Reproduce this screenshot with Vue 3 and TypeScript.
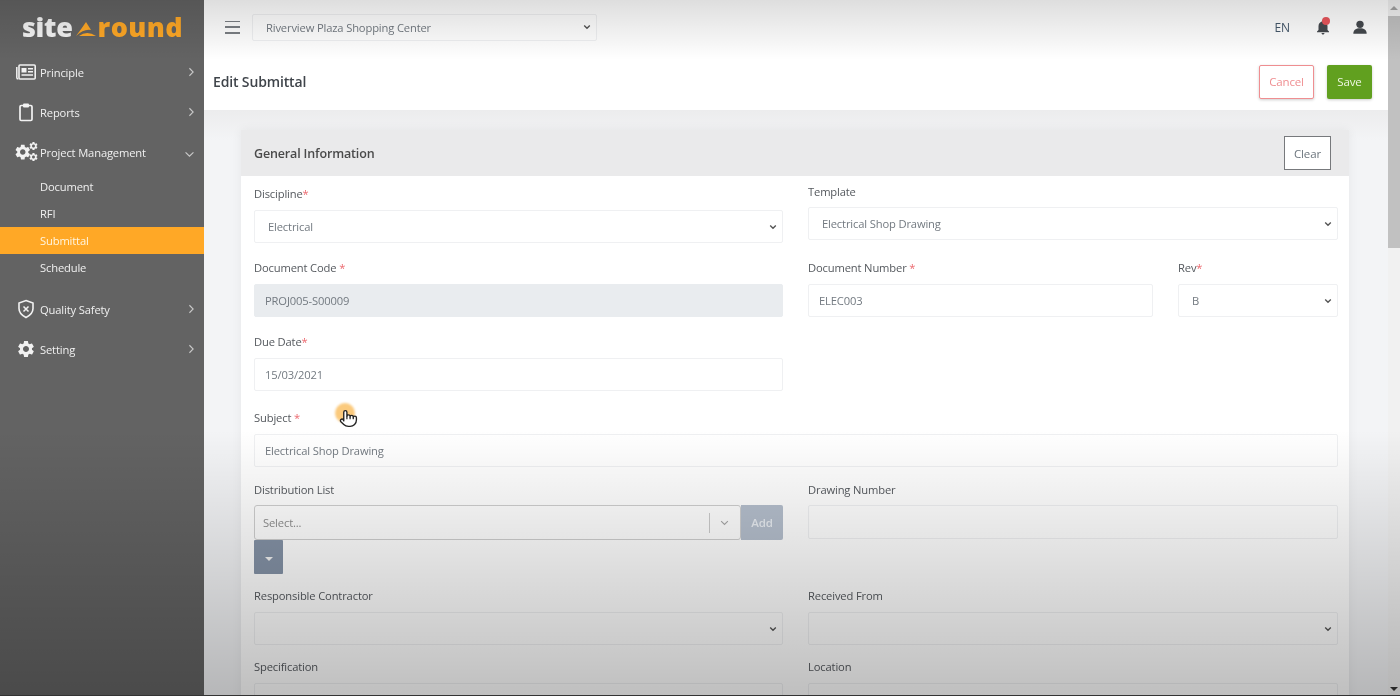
<template>
  <div class="app">
    <aside class="sidebar">
      <div class="logo">
        <span class="logo-site">site</span>
        <svg class="logo-mark" viewBox="0 0 20 14">
          <path d="M10 0 L15 8 Q8 6.500 0 14 Q6 6 10 0Z" fill="#ffa826" />
          <path d="M3 14 Q11 8 20 14Z" fill="#ffa826" />
        </svg>
        <span class="logo-round">round</span>
      </div>

      <nav class="nav">
        <a class="nav-item">
          <svg class="nav-icon" viewBox="0 0 20 16">
            <path d="M0.8 3v10.500c0 1 .7 1.500 1.500 1.500" fill="none" stroke="#f2f2f2" stroke-width="1.500" />
            <rect x="3" y="1" width="16.200" height="14" rx="1" fill="none" stroke="#f2f2f2" stroke-width="1.600" />
            <rect x="5.500" y="4" width="5" height="4.500" fill="#f2f2f2" />
            <path d="M12 4.700h5M12 7.700h5M5.500 11h11.500" stroke="#f2f2f2" stroke-width="1.400" />
          </svg>
          <span>Principle</span>
          <svg class="chev" viewBox="0 0 8 12"><path d="M1.500 1.500 6 6l-4.500 4.500" /></svg>
        </a>
        <a class="nav-item">
          <svg class="nav-icon" viewBox="0 0 20 20">
            <rect x="4" y="3.500" width="12" height="15" rx="1.200" fill="none" stroke="#f2f2f2" stroke-width="1.700" />
            <rect x="7" y="1.500" width="6" height="4" rx="1" fill="#f2f2f2" />
          </svg>
          <span>Reports</span>
          <svg class="chev" viewBox="0 0 8 12"><path d="M1.500 1.500 6 6l-4.500 4.500" /></svg>
        </a>
        <a class="nav-item">
          <svg class="nav-icon cogs" viewBox="0 0 24 20">
            <path :d="gearPath" fill="#f2f2f2" transform="translate(-1.500 .5) scale(.8)" />
            <path :d="gearPath" fill="#f2f2f2" transform="translate(14 -1.500) scale(.44)" />
            <path :d="gearPath" fill="#f2f2f2" transform="translate(14 10) scale(.44)" />
          </svg>
          <span>Project Management</span>
          <svg class="chev chev-open" viewBox="0 0 12 8"><path d="M1.500 1.500 6 6l4.500-4.500" /></svg>
        </a>
        <div class="subnav">
          <a v-for="item in subItems" :key="item" class="sub-item" :class="{ active: item === 'Submittal' }">{{ item }}</a>
        </div>
        <a class="nav-item">
          <svg class="nav-icon" viewBox="0 0 20 20">
            <path d="M10 1.500 17 4v5.500c0 4-3 7-7 9-4-2-7-5-7-9V4z" fill="none" stroke="#f2f2f2" stroke-width="1.600" />
            <path d="M7.500 7.500l5 5M12.500 7.500l-5 5" stroke="#f2f2f2" stroke-width="1.500" />
          </svg>
          <span>Quality Safety</span>
          <svg class="chev" viewBox="0 0 8 12"><path d="M1.500 1.500 6 6l-4.500 4.500" /></svg>
        </a>
        <a class="nav-item">
          <svg class="nav-icon" viewBox="0 0 24 24">
            <path :d="gearPath" fill="#f2f2f2" />
          </svg>
          <span>Setting</span>
          <svg class="chev" viewBox="0 0 8 12"><path d="M1.500 1.500 6 6l-4.500 4.500" /></svg>
        </a>
      </nav>
    </aside>

    <main class="main">
      <header class="topbar">
        <button class="burger" aria-label="menu"><i></i><i></i><i></i></button>
        <select class="project-select">
          <option>Riverview Plaza Shopping Center</option>
        </select>
        <div class="top-right">
          <span class="lang">EN</span>
          <span class="bell">
            <svg viewBox="0 0 24 24"><path d="M12 22c1.100 0 2-.9 2-2h-4c0 1.100.89 2 2 2zm6-6v-5c0-3.070-1.640-5.640-4.500-6.320V4c0-.83-.67-1.500-1.500-1.500s-1.500.67-1.500 1.500v.68C7.630 5.360 6 7.920 6 11v5l-2 2v1h16v-1l-2-2z" fill="#45494e" /></svg>
            <b class="dot"></b>
          </span>
          <svg class="user" viewBox="0 0 24 24">
            <circle cx="12" cy="8" r="5.500" fill="#45494e" />
            <path d="M2 22c0-5.500 4-8 10-8s10 2.500 10 8z" fill="#45494e" />
          </svg>
        </div>
      </header>

      <div class="page-head">
        <h1>Edit Submittal</h1>
        <div class="head-actions">
          <button class="btn-cancel">Cancel</button>
          <button class="btn-save">Save</button>
        </div>
      </div>

      <div class="content">
        <section class="card">
          <div class="card-head">
            <h2>General Information</h2>
            <button class="btn-clear">Clear</button>
          </div>
          <form class="form" @submit.prevent>
            <div class="row row-first">
              <div class="field shifted">
                <label>Discipline<em>*</em></label>
                <select><option>Electrical</option></select>
              </div>
              <div class="field">
                <label>Template</label>
                <select><option>Electrical Shop Drawing</option></select>
              </div>
            </div>

            <div class="row">
              <div class="field">
                <label>Document Code <em>*</em></label>
                <input value="PROJ005-S00009" disabled />
              </div>
              <div class="split">
                <div class="field">
                  <label>Document Number <em>*</em></label>
                  <input value="ELEC003" />
                </div>
                <div class="field">
                  <label>Rev<em>*</em></label>
                  <select><option>B</option></select>
                </div>
              </div>
            </div>

            <div class="row">
              <div class="field">
                <label>Due Date<em>*</em></label>
                <input value="15/03/2021" />
              </div>
            </div>

            <div class="field subject">
              <label>Subject <em>*</em></label>
              <input value="Electrical Shop Drawing" />
            </div>

            <div class="row row-dist">
              <div class="field">
                <label>Distribution List</label>
                <div class="combo-line">
                  <div class="combo">
                    <span>Select...</span>
                    <i class="combo-sep"></i>
                    <svg viewBox="0 0 12 8"><path d="M1.500 1.500 6 6l4.500-4.500" /></svg>
                  </div>
                  <button class="btn-add" type="button">Add</button>
                </div>
                <button class="btn-caret" type="button" aria-label="more"><i></i></button>
              </div>
              <div class="field">
                <label>Drawing Number</label>
                <input class="drawing" />
              </div>
            </div>

            <div class="row row-low">
              <div class="field">
                <label>Responsible Contractor</label>
                <select></select>
              </div>
              <div class="field">
                <label>Received From</label>
                <select></select>
              </div>
            </div>

            <div class="row row-low">
              <div class="field">
                <label>Specification</label>
                <input />
              </div>
              <div class="field">
                <label>Location</label>
                <input />
              </div>
            </div>
          </form>
        </section>
      </div>
    </main>

    <div class="scrollbar">
      <i class="arrow-up"></i>
      <div class="thumb"></div>
      <i class="arrow-down"></i>
    </div>

    <!-- video fade over the whole frame -->
    <div class="shade"></div>

    <div class="cursor">
      <span class="halo"></span>
      <svg viewBox="0 0 24 24">
        <path d="M18 11a2 2 0 1 1 4 0v3a8 8 0 0 1-8 8h-2c-2.800 0-4.500-.86-5.990-2.340l-3.600-3.600a2 2 0 0 1 2.830-2.820L6 15V4a2 2 0 0 1 4 0v5.500a2 2 0 0 1 4 0v.5a2 2 0 0 1 4 0z" fill="#fff" stroke="#222" stroke-width="1.700" stroke-linejoin="round" />
        <path d="M10 9.500V13M14 10v3M18 11v2" fill="none" stroke="#222" stroke-width="1.500" />
      </svg>
    </div>
  </div>
</template>

<script setup lang="ts">
const subItems: string[] = ['Document', 'RFI', 'Submittal', 'Schedule'];

const gearPath =
  'M19.14 12.94c.04-.3.06-.61.06-.94 0-.32-.02-.64-.07-.94l2.030-1.580c.18-.14.23-.41.12-.61l-1.920-3.320c-.12-.22-.37-.29-.59-.22l-2.390.96c-.5-.38-1.030-.7-1.620-.94l-.36-2.540c-.04-.24-.24-.41-.48-.41h-3.840c-.24 0-.43.17-.47.41l-.36 2.540c-.59.24-1.130.57-1.620.94l-2.390-.96c-.22-.08-.47 0-.59.22L2.740 8.870c-.12.21-.08.47.12.61l2.030 1.580c-.05.3-.09.63-.09.94s.02.64.07.94l-2.030 1.580c-.18.14-.23.41-.12.61l1.920 3.320c.12.22.37.29.59.22l2.390-.96c.5.38 1.030.7 1.620.94l.36 2.540c.05.24.24.41.48.41h3.840c.24 0 .44-.17.47-.41l.36-2.540c.59-.24 1.130-.56 1.620-.94l2.390.96c.22.08.47 0 .59-.22l1.920-3.320c.12-.22.07-.47-.12-.61l-2.010-1.580zM12 15.600c-1.980 0-3.600-1.620-3.600-3.600s1.620-3.600 3.600-3.600 3.600 1.620 3.600 3.600-1.620 3.600-3.600 3.600z';
</script>

<style>
html,
body {
  margin: 0;
  height: 100%;
  overflow: hidden;
}
</style>

<style scoped>
.app {
  position: relative;
  display: flex;
  height: 696px;
  overflow: hidden;
  font-family: 'Open Sans', 'Noto Sans', sans-serif;
  font-size: 11.200px;
  letter-spacing: -0.15px;
  color: #555;
  filter: blur(0.45px);
}

/* sidebar */
.sidebar {
  flex: 0 0 204px;
  background: #636363;
  color: #f0f0f0;
}
.logo {
  height: 53px;
  display: flex;
  align-items: center;
  justify-content: center;
  padding: 0 0 0 1px;
  box-sizing: border-box;
  font-weight: 800;
  font-size: 27px;
}
.logo-site {
  color: #f4f4f4;
  letter-spacing: -0.3px;
}
.logo-round {
  color: #ffa826;
  letter-spacing: 0.4px;
}
.logo-mark {
  width: 20px;
  height: 14px;
  margin: 4px 2px 0 3px;
}
.nav-item {
  height: 40px;
  box-sizing: border-box;
  display: flex;
  align-items: center;
  padding: 0 9px 2px 16px;
  gap: 4px;
}
.nav-item span {
  flex: 1;
}
.nav-icon {
  width: 20px;
  height: 20px;
}
.cogs {
  width: 23px;
  margin-left: -1px;
  margin-right: -2px;
}
.chev {
  width: 7px;
  height: 10px;
  fill: none;
  stroke: #c9c9c9;
  stroke-width: 1.300;
}
.chev-open {
  width: 11px;
  height: 7px;
  margin-top: 4px;
}
.subnav {
  padding-bottom: 9px;
}
.sub-item {
  display: block;
  height: 27px;
  line-height: 27px;
  padding-left: 40px;
}
.sub-item.active {
  background: #ffa826;
  color: #fff5e0;
}

/* main area */
.main {
  flex: 1;
  min-width: 0;
  display: flex;
  flex-direction: column;
  background: #f3f4f6;
}
.topbar {
  height: 60px;
  flex: none;
  display: flex;
  align-items: center;
  padding: 0 20px 6px 21px;
  box-sizing: border-box;
  background: #fff;
}
.burger {
  width: 15px;
  height: 13px;
  padding: 0;
  margin-right: 12px;
  border: 0;
  background: none;
  display: flex;
  flex-direction: column;
  justify-content: space-between;
}
.burger i {
  display: block;
  height: 1.500px;
  background: #7b7f84;
}
.project-select {
  width: 345px;
  height: 27px;
}
.top-right {
  margin-left: auto;
  display: flex;
  align-items: center;
}
.lang {
  font-size: 12px;
  color: #45586b;
  margin-right: 25px;
}
.bell {
  position: relative;
  display: block;
  width: 16px;
  height: 16px;
  margin-right: 21px;
}
.bell svg {
  display: block;
  width: 18px;
  height: 18px;
  margin: -1px;
}
.dot {
  position: absolute;
  top: -2px;
  right: 1px;
  width: 8px;
  height: 8px;
  border-radius: 50%;
  background: #e9565c;
}
.user {
  width: 16px;
  height: 16px;
}
.page-head {
  height: 50px;
  flex: none;
  display: flex;
  align-items: center;
  justify-content: space-between;
  padding: 0 16px 7px 9px;
  box-sizing: border-box;
  background: #fff;
}
h1 {
  margin: 0;
  font-size: 14px;
  font-weight: 600;
  color: #3f444a;
}
.head-actions {
  display: flex;
  gap: 13px;
}
button {
  font-family: inherit;
  letter-spacing: inherit;
}
.btn-cancel,
.btn-save {
  height: 34px;
  font-size: 11.500px;
  border-radius: 2px;
  box-shadow: 0 1px 3px rgba(0, 0, 0, 0.2);
}
.btn-cancel {
  width: 55px;
  background: #fff;
  color: #ef8e91;
  border: 1px solid #ef8e91;
}
.btn-save {
  width: 45px;
  background: #61a01f;
  color: #eef6e2;
  border: 0;
}
.content {
  flex: 1;
  padding: 20px 39px 0 37px;
  min-height: 0;
  background: linear-gradient(to bottom, #ececed, #f3f4f6 30px);
}
.card {
  background: #fff;
  box-shadow: 0 0 10px rgba(0, 0, 0, 0.06);
}
.card-head {
  height: 46px;
  display: flex;
  align-items: center;
  justify-content: space-between;
  padding: 0 18px 0 13px;
  background: #eaeaeb;
}
h2 {
  margin: 0;
  font-size: 12.500px;
  font-weight: 600;
  color: #4a4a4a;
}
.btn-clear {
  width: 47px;
  height: 34px;
  background: #fff;
  border: 1px solid #77797c;
  font-size: 11.500px;
  color: #6c757d;
}

/* form */
.form {
  padding: 7px 11px 40px 13px;
}
.row {
  display: grid;
  grid-template-columns: 529px 530px;
  column-gap: 25px;
  margin-top: 16px;
}
.row-first {
  margin-top: 0;
}
.row-dist {
  margin-top: 14px;
}
.row-low {
  margin-top: 13px;
}
.split {
  display: grid;
  grid-template-columns: 1fr 160px;
  column-gap: 25px;
}
.field {
  min-width: 0;
}
.subject {
  margin-top: 18px;
}
label {
  display: block;
  height: 18px;
  line-height: 18px;
  margin-bottom: 7px;
  color: #55595e;
}
.row-first .field label,
.row-dist .field label {
  margin-bottom: 6px;
}
.row-first .field.shifted {
  padding-top: 2px;
}
.row-first .field.shifted label {
  margin-bottom: 7px;
}
em {
  font-style: normal;
  color: #ec6a70;
}
select,
input {
  display: block;
  width: 100%;
  height: 33px;
  box-sizing: border-box;
  border: 1px solid #eff0f2;
  border-radius: 2px;
  background-color: #fff;
  font-family: inherit;
  font-size: 11.200px;
  letter-spacing: inherit;
  color: #737a81;
  outline: none;
}
select {
  appearance: none;
  padding: 0 20px 0 13px;
  background-image: url("data:image/svg+xml,%3Csvg xmlns='http://www.w3.org/2000/svg' viewBox='0 0 10 7'%3E%3Cpath d='M1.500 1.500 5 5l3.500-3.500' fill='none' stroke='%23555' stroke-width='1.700'/%3E%3C/svg%3E");
  background-repeat: no-repeat;
  background-position: right 5px center;
  background-size: 8px 6px;
}
input {
  padding: 0 10px;
}
input:disabled {
  background: #e9ecef;
  border-color: #e9ecef;
}
.drawing {
  height: 34px;
}
.combo-line {
  display: flex;
  height: 35px;
}
.combo {
  flex: 1;
  display: flex;
  align-items: center;
  padding: 0 9px 0 8px;
  background: #fff;
  border: 1px solid #cfcfcf;
  border-radius: 3px;
  color: #8d8d8d;
}
.combo span {
  flex: 1;
}
.combo-sep {
  width: 1px;
  height: 20px;
  background: #ccc;
  margin-right: 10px;
}
.combo svg {
  width: 9px;
  height: 6px;
  fill: none;
  stroke: #a8a8a8;
  stroke-width: 1.500;
  margin-right: 2px;
}
.btn-add {
  width: 42px;
  border: 0;
  padding: 0;
  background: #b5bfcd;
  color: #e9edf2;
  font-size: 11.500px;
  font-weight: 600;
  border-radius: 0 2px 2px 0;
}
.btn-caret {
  display: flex;
  align-items: center;
  justify-content: center;
  width: 29px;
  height: 34px;
  padding: 0;
  border: 0;
  background: #8593a7;
  border-radius: 1px;
}
.btn-caret i {
  margin-top: 4px;
  border: 4px solid transparent;
  border-top-color: #f4f4f4;
  border-bottom: 0;
}

/* scrollbar */
.scrollbar {
  flex: 0 0 12px;
  display: flex;
  flex-direction: column;
  align-items: center;
  background: #f1f1f1;
}
.arrow-up {
  margin: 6px 0 6px;
  border: 4px solid transparent;
  border-bottom-color: #a3a3a3;
  border-top: 0;
}
.thumb {
  width: 100%;
  height: 232px;
  background: #c1c1c1;
}
.arrow-down {
  margin-top: auto;
  margin-bottom: 5px;
  border: 4px solid transparent;
  border-top-color: #333;
  border-bottom: 0;
}

/* fade and pointer lie on top of everything */
.shade {
  position: absolute;
  inset: 0;
  pointer-events: none;
  background:
    linear-gradient(to bottom, rgba(0, 0, 0, 0.13), rgba(0, 0, 0, 0) 60px),
    linear-gradient(to bottom, rgba(0, 0, 0, 0) 430px, rgba(0, 0, 0, 0.25) 696px);
  border-bottom: 1px solid #333;
  box-sizing: border-box;
}
.cursor {
  position: absolute;
  left: 335px;
  top: 403px;
  width: 26px;
  height: 26px;
  pointer-events: none;
}
.halo {
  position: absolute;
  left: 0;
  top: 0;
  width: 20px;
  height: 20px;
  border-radius: 50%;
  background: rgba(250, 180, 70, 0.7);
  filter: blur(1px);
}
.cursor svg {
  position: absolute;
  left: 4px;
  top: 6px;
  width: 19px;
  height: 19px;
}
</style>
